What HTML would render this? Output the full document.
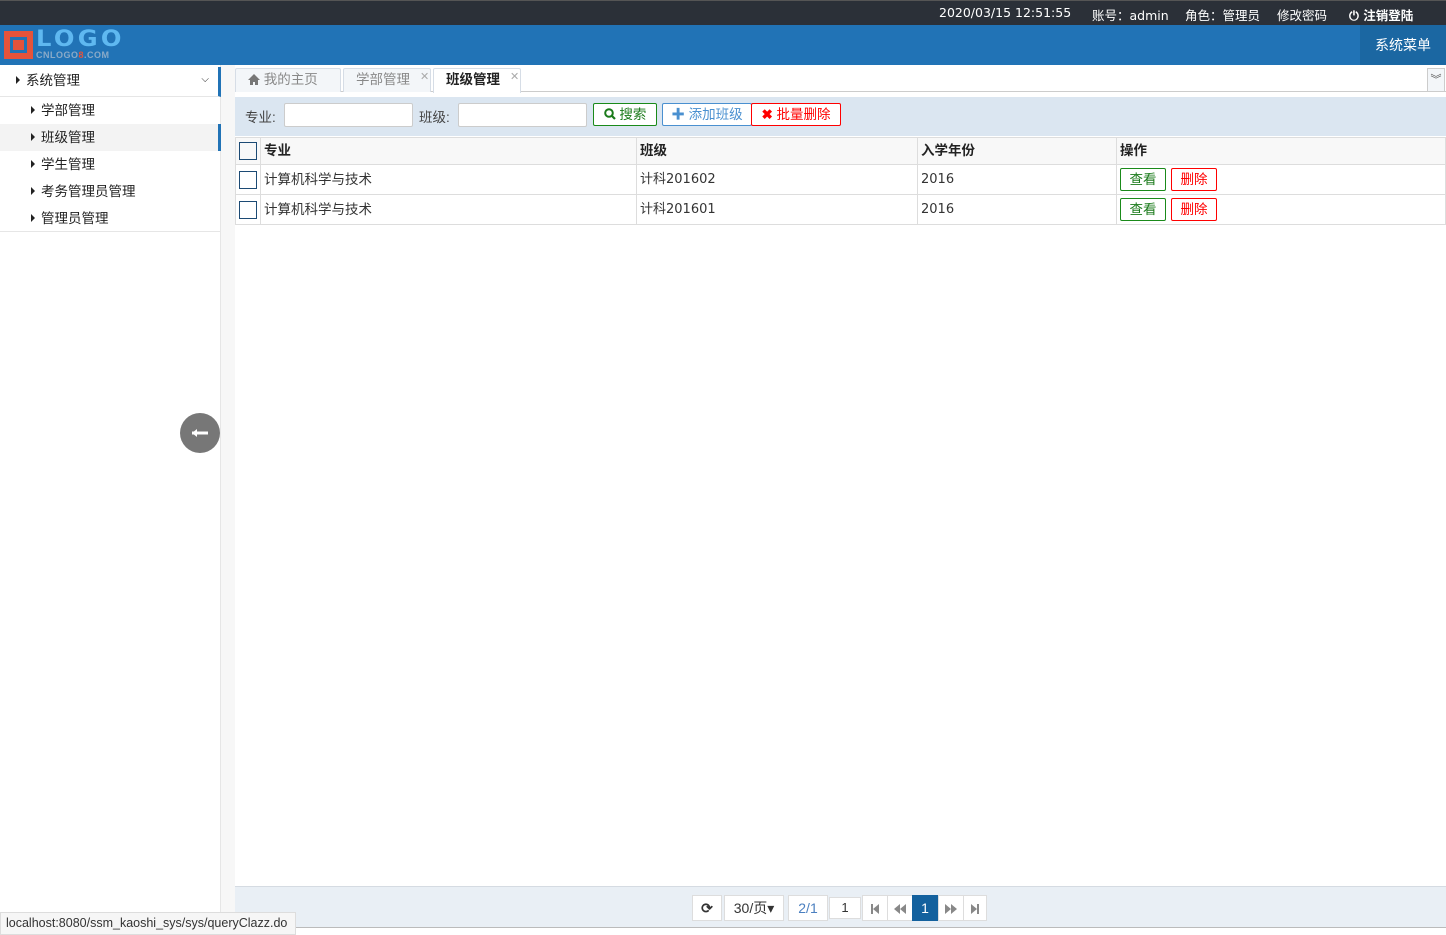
<!DOCTYPE html>
<html><head><meta charset="utf-8"><style>
*{box-sizing:border-box;margin:0;padding:0}
body{width:1446px;height:935px;overflow:hidden;font-family:"Liberation Sans","Noto Sans CJK SC",sans-serif;font-size:13px;color:#333;background:#fff;position:relative}
.a{position:absolute}
.top{left:0;top:0;width:1446px;height:25px;background:#2b3038;border-top:1px solid #555;color:#fff;font-size:12.5px;font-family:"DejaVu Sans","Noto Sans CJK SC",sans-serif}
.top span{position:absolute;top:4px}
.hdr{left:0;top:25px;width:1446px;height:40px;background:#2173b6}
.menu{left:1360px;top:25px;width:86px;height:40px;background:#1b67a2;color:#fff;font-size:14px;line-height:40px;text-align:center}
.side{left:0;top:65px;width:221px;height:870px;background:#fff;border-right:1px solid #e6e6e6}
.it{position:absolute;left:0;width:221px;height:27px;line-height:27px;font-size:13.5px;color:#222}
.tri{display:inline-block;width:0;height:0;border-left:4px solid #222;border-top:4px solid transparent;border-bottom:4px solid transparent;margin-right:6px;vertical-align:1px}
.gap{left:221px;top:65px;width:14px;height:870px;background:#f7f7f7}
.tabs{left:235px;top:65px;width:1211px;height:27px;border-bottom:1px solid #ccc}
.tab{position:absolute;top:3px;height:24px;border:1px solid #d6dde6;border-bottom:none;background:#f3f6f9;color:#888;line-height:22px;font-size:13.5px;border-radius:2px 2px 0 0}
.x{position:absolute;top:-3px;font-size:11px;color:#aaa}
.tb{left:235px;top:97px;width:1211px;height:39px;background:#dbe6f1}
.inp{position:absolute;top:6px;height:24px;width:129px;background:#fff;border:1px solid #ccc;border-radius:2px}
.btn{position:absolute;top:6px;height:23px;border-radius:2px;font-size:13.5px;line-height:21px;text-align:center;background:#fff}
table{position:absolute;left:235px;top:137px;width:1211px;border-collapse:collapse}
td{border:1px solid #ddd;padding:0 3px;font-size:13.5px;height:30px;line-height:16px}
td.n{font-family:"DejaVu Sans","Noto Sans CJK SC",sans-serif;font-size:13px}
tr.h td{background:#f8f8f8;height:27px;font-weight:bold;color:#222}
.cb{display:inline-block;width:18px;height:18px;border:1.5px solid #1c4a74;vertical-align:middle}
.ob{display:inline-block;width:46px;height:23px;line-height:21px;text-align:center;border-radius:2px;margin-right:5px;font-size:13.5px}
.pg{left:235px;top:886px;width:1211px;height:42px;background:#e9eff5;border-top:1px solid #d5dbe2;border-bottom:1px solid #bbb}
.pb{position:absolute;top:8px;height:26px;border:1px solid #ddd;background:#fff;line-height:24px;text-align:center;color:#777;font-size:14px}
.pb svg{vertical-align:middle}
</style></head><body>
<div class="a top"><span style="left:939px">2020/03/15 12:51:55</span><span style="left:1092px">账号：admin</span><span style="left:1185px">角色：管理员</span><span style="left:1277px">修改密码</span><span style="left:1349px;font-weight:bold">⏻ 注销登陆</span></div>
<div class="a hdr"></div>
<div class="a" style="left:4px;top:31px;width:29px;height:28px;background:#e5533b"><div style="position:absolute;left:6px;top:6px;width:17px;height:16px;border:3px solid #2173b6"></div></div>
<div class="a" style="left:36px;top:27px;color:#5fb8f0;font-size:22px;font-weight:bold;letter-spacing:3px;font-family:'DejaVu Sans',sans-serif;transform:scaleX(1.1);transform-origin:left">LOGO</div>
<div class="a" style="left:36px;top:50px;color:#8aaac8;font-size:9px;font-weight:bold;letter-spacing:0.5px">CNLOGO<span style="color:#e5533b">8</span>.COM</div>
<div class="a menu">系统菜单</div>
<div class="a side">
<div class="it" style="top:2px;height:30px;line-height:28px;padding-left:16px;border-bottom:1px solid #e6e6e6;border-right:3px solid #2173b6"><span class="tri"></span>系统管理<span style="position:absolute;right:9px;top:-1px;font-size:10px">⌵</span></div>
<div class="it" style="top:32px;padding-left:31px"><span class="tri"></span>学部管理</div>
<div class="it" style="top:59px;padding-left:31px;background:#f3f3f3;border-right:3px solid #2173b6"><span class="tri"></span>班级管理</div>
<div class="it" style="top:86px;padding-left:31px"><span class="tri"></span>学生管理</div>
<div class="it" style="top:113px;padding-left:31px"><span class="tri"></span>考务管理员管理</div>
<div class="it" style="top:140px;padding-left:31px;border-bottom:1px solid #e6e6e6"><span class="tri"></span>管理员管理</div>
</div>
<div class="a gap"></div>
<div class="a" style="left:180px;top:413px;width:40px;height:40px;border-radius:50%;background:#777"><svg width="40" height="40"><path d="M12 20h16" stroke="#fff" stroke-width="3"/><path d="M12 20l5-4v8z" fill="#fff"/></svg></div>
<div class="a tabs">
<div class="tab" style="left:0;width:106px;padding-left:12px"><svg width="12" height="11" style="vertical-align:-1px"><path d="M6 0L0 6h2v5h3V8h2v3h3V6h2z" fill="#777"/></svg> 我的主页</div>
<div class="tab" style="left:108px;width:88px;padding-left:12px">学部管理<span class="x" style="left:76px">✕</span></div>
<div class="tab" style="left:198px;width:88px;padding-left:12px;background:#fff;color:#222;font-weight:bold;height:25px">班级管理<span class="x" style="left:76px;font-weight:normal">✕</span></div>
<div style="position:absolute;right:1px;top:3px;width:18px;height:24px;border:1px solid #ccc;background:#f3f6f9;font-size:11px;text-align:center;line-height:22px;color:#555">︾</div>
</div>
<div class="a tb">
<span style="position:absolute;left:10px;top:9px;font-size:13.5px;color:#444">专业:</span><div class="inp" style="left:49px"></div>
<span style="position:absolute;left:184px;top:9px;font-size:13.5px;color:#444">班级:</span><div class="inp" style="left:223px"></div>
<div class="btn" style="left:358px;width:64px;border:1px solid #1a8a1a;color:#1a7a1a"><svg width="12" height="12" style="vertical-align:-1px"><circle cx="5" cy="5" r="3.8" stroke="#1a7a1a" stroke-width="2" fill="none"/><path d="M7.5 7.5l3.5 3.5" stroke="#1a7a1a" stroke-width="2.2"/></svg> 搜索</div>
<div class="btn" style="left:427px;width:90px;border:1px solid #4a90d0;color:#4a90d0"><b>✚</b> 添加班级</div>
<div class="btn" style="left:516px;width:90px;border:1px solid #f00;color:#f00"><b>✖</b> 批量删除</div>
</div>
<table>
<tr class="h"><td style="width:25px"><span class="cb"></span></td><td style="width:376px">专业</td><td style="width:281px">班级</td><td style="width:199px">入学年份</td><td>操作</td></tr>
<tr><td><span class="cb"></span></td><td>计算机科学与技术</td><td class="n">计科201602</td><td class="n">2016</td><td><span class="ob" style="border:1px solid #1a8a1a;color:#1a7a1a">查看</span><span class="ob" style="border:1px solid #f00;color:#f00">删除</span></td></tr>
<tr><td><span class="cb"></span></td><td>计算机科学与技术</td><td class="n">计科201601</td><td class="n">2016</td><td><span class="ob" style="border:1px solid #1a8a1a;color:#1a7a1a">查看</span><span class="ob" style="border:1px solid #f00;color:#f00">删除</span></td></tr>
</table>
<div class="a pg">
<div class="pb" style="left:457px;width:30px;color:#333;font-weight:bold">⟳</div>
<div class="pb" style="left:489px;width:60px;color:#333">30/页▾</div>
<div class="pb" style="left:553px;width:40px;color:#4a7fc0">2/1</div>
<div class="pb" style="left:594px;width:32px;color:#333;font-size:13px;top:10px;height:22px;line-height:20px">1</div>
<div class="pb" style="left:627px;width:26px"><svg width="10" height="12"><rect x="1" y="1" width="2" height="10" fill="#888"/><path d="M9 1v10L3 6z" fill="#888"/></svg></div>
<div class="pb" style="left:652px;width:26px"><svg width="14" height="12"><path d="M7 1v10L1 6zM13 1v10L7 6z" fill="#888"/></svg></div>
<div class="pb" style="left:677px;width:26px;background:#13619e;color:#fff;border-color:#13619e">1</div>
<div class="pb" style="left:703px;width:26px"><svg width="14" height="12"><path d="M1 1v10l6-5zM7 1v10l6-5z" fill="#888"/></svg></div>
<div class="pb" style="left:728px;width:24px"><svg width="10" height="12"><path d="M1 1v10l6-5z" fill="#888"/><rect x="7" y="1" width="2" height="10" fill="#888"/></svg></div>
</div>
<div class="a" style="left:0;top:912px;height:23px;width:296px;background:#f6f6f6;border:1px solid #ddd;font-size:12.5px;line-height:21px;padding-left:5px;color:#333">localhost:8080/ssm_kaoshi_sys/sys/queryClazz.do</div>
</body></html>
